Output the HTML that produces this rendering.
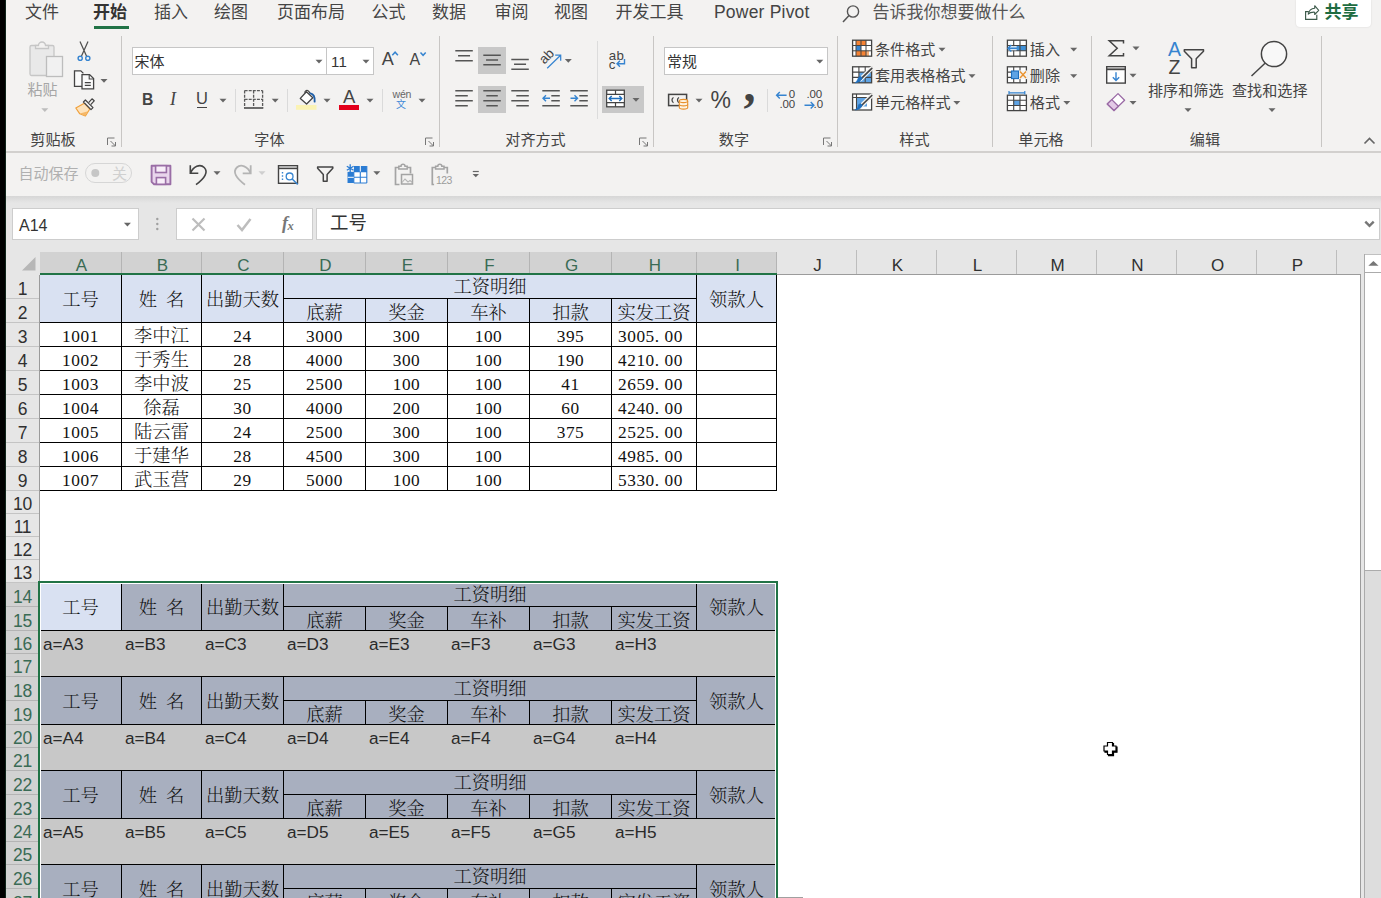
<!DOCTYPE html>
<html lang="zh-CN"><head><meta charset="utf-8"><title>Excel</title>
<style>
*{box-sizing:border-box;margin:0;padding:0}
html,body{width:1381px;height:898px;overflow:hidden;background:#f3f2f1}
body{position:relative;font-family:"Liberation Sans","Noto Sans CJK SC",sans-serif;color:#444;-webkit-font-smoothing:antialiased}
.a{position:absolute}
.t{position:absolute;white-space:nowrap;line-height:1}
.ser{font-family:"Liberation Serif","Noto Serif CJK SC",serif}
.c{position:absolute;text-align:center;white-space:nowrap;overflow:hidden}
svg{position:absolute;left:0;top:0;overflow:visible}

.hd{position:absolute;text-align:center;font-size:17px;line-height:22px;color:#303030;white-space:nowrap}
.hd.s{color:#3a6b55}
.rh{position:absolute;left:6px;width:33px;text-align:center;font-size:17.5px;color:#303030;white-space:nowrap;letter-spacing:-0.3px}
.rh.s{color:#3a6b55}
.cell{position:absolute;text-align:center;white-space:nowrap;font-family:"Liberation Serif","Noto Serif CJK SC",serif;font-size:18.3px;color:#111;font-weight:300}
.n{font-size:17.3px;letter-spacing:0.55px}
.f{position:absolute;white-space:nowrap;font-size:17.2px;color:#2a2a2a;font-family:"Liberation Sans","Noto Sans CJK SC",sans-serif}
.ln{position:absolute;background:#000}
</style></head>
<body>
<div class="a" style="left:0px;top:0px;width:5px;height:898px;background:#000;"></div>
<div class="a" style="left:5px;top:0px;width:1px;height:898px;background:#10261b;"></div>
<div class="a" style="left:6px;top:151px;width:1375px;height:2px;background:#d2d0ce;"></div>
<div class="a" style="left:6px;top:153px;width:1375px;height:43px;background:#f3f2f1;"></div>
<div class="a" style="left:6px;top:196px;width:1375px;height:51px;background:#e6e6e6;"></div>
<div class="a" style="left:6px;top:196px;width:1375px;height:7px;background:linear-gradient(#d6d6d6,#e6e6e6);"></div>
<div class="t" style="left:25px;top:4px;font-size:17px;height:17px;line-height:17px;color:#444;">文件</div>
<div class="t" style="left:154px;top:4px;font-size:17px;height:17px;line-height:17px;color:#444;">插入</div>
<div class="t" style="left:214px;top:4px;font-size:17px;height:17px;line-height:17px;color:#444;">绘图</div>
<div class="t" style="left:277px;top:4px;font-size:17px;height:17px;line-height:17px;color:#444;">页面布局</div>
<div class="t" style="left:371.5px;top:4px;font-size:17px;height:17px;line-height:17px;color:#444;">公式</div>
<div class="t" style="left:432px;top:4px;font-size:17px;height:17px;line-height:17px;color:#444;">数据</div>
<div class="t" style="left:494.5px;top:4px;font-size:17px;height:17px;line-height:17px;color:#444;">审阅</div>
<div class="t" style="left:554px;top:4px;font-size:17px;height:17px;line-height:17px;color:#444;">视图</div>
<div class="t" style="left:615.5px;top:4px;font-size:17px;height:17px;line-height:17px;color:#444;">开发工具</div>
<div class="t" style="left:93px;top:4px;font-size:17px;height:17px;line-height:17px;color:#333;font-weight:bold">开始</div>
<div class="a" style="left:94px;top:26px;width:35px;height:3px;background:#217346;"></div>
<div class="t" style="left:714px;top:3.75px;font-size:17.5px;height:17.5px;line-height:17.5px;color:#444;letter-spacing:0.2px">Power Pivot</div>
<div class="t" style="left:872.5px;top:4px;font-size:17px;height:17px;line-height:17px;color:#555;">告诉我你想要做什么</div>
<div class="a" style="left:1296px;top:0px;width:75px;height:27px;background:#fff;border-radius:0 0 4px 4px;box-shadow:0 0 2px rgba(0,0,0,.12)"></div>
<div class="t" style="left:1324.5px;top:4.3px;font-size:17px;height:17px;line-height:17px;color:#1e6c41;font-weight:bold">共享</div>
<div class="a" style="left:121px;top:36px;width:1px;height:111px;background:#c8c6c4;"></div>
<div class="a" style="left:439px;top:36px;width:1px;height:111px;background:#c8c6c4;"></div>
<div class="a" style="left:597px;top:41px;width:1px;height:78px;background:#dcdcdc;"></div>
<div class="a" style="left:653px;top:36px;width:1px;height:111px;background:#c8c6c4;"></div>
<div class="a" style="left:837px;top:36px;width:1px;height:111px;background:#c8c6c4;"></div>
<div class="a" style="left:992px;top:36px;width:1px;height:111px;background:#c8c6c4;"></div>
<div class="a" style="left:1091px;top:36px;width:1px;height:111px;background:#c8c6c4;"></div>
<div class="a" style="left:1321px;top:36px;width:1px;height:111px;background:#c8c6c4;"></div>
<div class="a" style="left:235px;top:89px;width:1px;height:23px;background:#dadada;"></div>
<div class="a" style="left:287px;top:89px;width:1px;height:23px;background:#dadada;"></div>
<div class="a" style="left:382px;top:89px;width:1px;height:23px;background:#dadada;"></div>
<div class="a" style="left:767px;top:89px;width:1px;height:23px;background:#dadada;"></div>
<div class="t" style="left:30.3px;top:132.25px;font-size:15.1px;height:15.1px;line-height:15.1px;color:#444;">剪贴板</div>
<div class="t" style="left:254.3px;top:132.25px;font-size:15.1px;height:15.1px;line-height:15.1px;color:#444;">字体</div>
<div class="t" style="left:505.3px;top:132.25px;font-size:15.1px;height:15.1px;line-height:15.1px;color:#444;">对齐方式</div>
<div class="t" style="left:718.8px;top:132.25px;font-size:15.1px;height:15.1px;line-height:15.1px;color:#444;">数字</div>
<div class="t" style="left:899.3px;top:132.25px;font-size:15.1px;height:15.1px;line-height:15.1px;color:#444;">样式</div>
<div class="t" style="left:1018.3px;top:132.25px;font-size:15.1px;height:15.1px;line-height:15.1px;color:#444;">单元格</div>
<div class="t" style="left:1189.8px;top:132.25px;font-size:15.1px;height:15.1px;line-height:15.1px;color:#444;">编辑</div>
<div class="t" style="left:27.5px;top:81.5px;font-size:15px;height:15px;line-height:15px;color:#a6a6a6;">粘贴</div>
<div class="a" style="left:132px;top:47px;width:195px;height:28px;background:#fff;border:1px solid #c6c6c6"></div>
<div class="a" style="left:327px;top:47px;width:47px;height:28px;background:#fff;border:1px solid #c6c6c6;border-left:none"></div>
<div class="t" style="left:134.5px;top:53.5px;font-size:15px;height:15px;line-height:15px;color:#333;">宋体</div>
<div class="t" style="left:331px;top:53.5px;font-size:15px;height:15px;line-height:15px;color:#333;letter-spacing:0.3px">11</div>
<div class="t" style="left:381.8px;top:50px;font-size:18px;height:18px;line-height:18px;color:#444;">A</div>
<div class="t" style="left:409.5px;top:52px;font-size:16px;height:16px;line-height:16px;color:#444;">A</div>
<div class="t" style="left:141.6px;top:90.7px;font-size:17px;height:17px;line-height:17px;color:#444;font-weight:bold;transform:scaleX(0.92);transform-origin:0 0">B</div>
<div class="t" style="left:170px;top:90px;font-size:18px;height:18px;line-height:18px;color:#444;font-style:italic;font-family:'Liberation Serif',serif">I</div>
<div class="t" style="left:196px;top:90.25px;font-size:16.5px;height:16.5px;line-height:16.5px;color:#444;">U</div>
<div class="a" style="left:196.5px;top:106.5px;width:10.5px;height:1.3px;background:#444;"></div>
<div class="t" style="left:343px;top:87.55px;font-size:18.5px;height:18.5px;line-height:18.5px;color:#444;">A</div>
<div class="a" style="left:339px;top:105px;width:20px;height:5px;background:#e3001b;"></div>
<div class="t" style="left:392.5px;top:89.05px;font-size:10.5px;height:10.5px;line-height:10.5px;color:#666;letter-spacing:-0.2px">wén</div>
<div class="t" style="left:396px;top:100.2px;font-size:10px;height:10px;line-height:10px;color:#3f8ad8;">文</div>
<div class="a" style="left:478px;top:47px;width:28px;height:27px;background:#c8c8c8;"></div>
<div class="a" style="left:478px;top:86px;width:28px;height:27px;background:#c8c8c8;"></div>
<div class="a" style="left:602px;top:86px;width:42px;height:27px;background:#c8c8c8;"></div>
<div class="t" style="left:539.8px;top:48.7px;font-size:13.5px;color:#444;transform:rotate(-46deg);transform-origin:8px 8px">ab</div>
<div class="t" style="left:608.8px;top:48.65px;font-size:13.3px;height:13.3px;line-height:13.3px;color:#444;letter-spacing:0.2px">ab</div>
<div class="t" style="left:608.8px;top:57.85px;font-size:13.3px;height:13.3px;line-height:13.3px;color:#444;">c</div>
<div class="a" style="left:664px;top:47px;width:164px;height:28px;background:#fff;border:1px solid #c6c6c6"></div>
<div class="t" style="left:667px;top:53.5px;font-size:15px;height:15px;line-height:15px;color:#333;">常规</div>
<div class="t" style="left:710.5px;top:89px;font-size:23px;height:23px;line-height:23px;color:#444;">%</div>
<div class="t" style="left:743.5px;top:60.5px;font-size:48px;height:48px;line-height:48px;color:#444;font-family:'Liberation Serif',serif;font-weight:bold">,</div>
<div class="t" style="left:788.8px;top:89.25px;font-size:11.5px;height:11.5px;line-height:11.5px;color:#444;">0</div>
<div class="t" style="left:779.5px;top:99.25px;font-size:11.5px;height:11.5px;line-height:11.5px;color:#444;letter-spacing:-0.2px">.00</div>
<div class="t" style="left:806.5px;top:89.25px;font-size:11.5px;height:11.5px;line-height:11.5px;color:#444;letter-spacing:-0.2px">.00</div>
<div class="t" style="left:813.5px;top:99.25px;font-size:11.5px;height:11.5px;line-height:11.5px;color:#444;">.0</div>
<div class="t" style="left:875px;top:41.75px;font-size:15.1px;height:15.1px;line-height:15.1px;color:#444;">条件格式</div>
<div class="t" style="left:875px;top:68.25px;font-size:15.1px;height:15.1px;line-height:15.1px;color:#444;">套用表格格式</div>
<div class="t" style="left:875px;top:95.05px;font-size:15.1px;height:15.1px;line-height:15.1px;color:#444;">单元格样式</div>
<div class="t" style="left:1029.8px;top:41.75px;font-size:15.1px;height:15.1px;line-height:15.1px;color:#444;">插入</div>
<div class="t" style="left:1029.8px;top:68.25px;font-size:15.1px;height:15.1px;line-height:15.1px;color:#444;">删除</div>
<div class="t" style="left:1029.8px;top:95.05px;font-size:15.1px;height:15.1px;line-height:15.1px;color:#444;">格式</div>
<div class="t" style="left:1168px;top:40.25px;font-size:19.5px;height:19.5px;line-height:19.5px;color:#3684d0;">A</div>
<div class="t" style="left:1168.5px;top:58.25px;font-size:19.5px;height:19.5px;line-height:19.5px;color:#444;">Z</div>
<div class="t" style="left:1148px;top:82.95px;font-size:15.1px;height:15.1px;line-height:15.1px;color:#444;">排序和筛选</div>
<div class="t" style="left:1232px;top:82.95px;font-size:15.1px;height:15.1px;line-height:15.1px;color:#444;">查找和选择</div>
<div class="t" style="left:18.5px;top:165.8px;font-size:15px;height:15px;line-height:15px;color:#b0b0b0;">自动保存</div>
<div class="a" style="left:85px;top:163px;width:47px;height:20px;background:#f3f2f1;border:1.3px solid #d6d6d6;border-radius:10px"></div>
<div class="t" style="left:112px;top:165.8px;font-size:15px;height:15px;line-height:15px;color:#d0d0d0;">关</div>
<div class="t" style="left:436px;top:175.05px;font-size:10.5px;height:10.5px;line-height:10.5px;color:#9c9c9c;letter-spacing:-0.6px">123</div>
<div class="a" style="left:12px;top:208px;width:127px;height:32px;background:#fff;border:1px solid #cdcdcd"></div>
<div class="t" style="left:19px;top:217.8px;font-size:16px;height:16px;line-height:16px;color:#333;">A14</div>
<div class="a" style="left:176px;top:208px;width:137px;height:32px;background:#fff;border:1px solid #cdcdcd"></div>
<div class="t" style="left:282px;top:214.3px;font-size:18px;height:18px;line-height:18px;color:#777;font-style:italic;font-weight:bold;font-family:'Liberation Serif',serif">f</div>
<div class="t" style="left:287.5px;top:219.75px;font-size:12.5px;height:12.5px;line-height:12.5px;color:#777;font-style:italic;font-weight:bold;font-family:'Liberation Serif',serif">x</div>
<div class="a" style="left:316px;top:208px;width:1064px;height:32px;background:#fff;border:1px solid #cdcdcd"></div>
<div class="t" style="left:330px;top:213.8px;font-size:18.4px;height:18.4px;line-height:18.4px;color:#333;">工号</div>
<svg width="1381" height="260"><circle cx="853" cy="11.5" r="5.6" fill="none" stroke="#555" stroke-width="1.4"/><path d="M849,15.5 L843,22" stroke="#555" stroke-width="1.5"/>
<path d="M1308.8,11.6 H1305.6 V19.4 H1316.8 V14.8" fill="none" stroke="#3c5a4a" stroke-width="1.15"/><path d="M1308.2,14.2 C1309,10.2 1311.5,8.4 1314.7,8.3 V5.7 L1318.7,10.3 L1314.7,14.5 V12.2 C1311.8,12 1309.6,12.7 1308.2,14.2 Z" fill="none" stroke="#3c5a4a" stroke-width="1.1" stroke-linejoin="round"/>
<path d="M107.5,145 v-7 h7" fill="none" stroke="#777" stroke-width="1"/><path d="M110.5,141 l5,5 M115.5,146 v-4 M115.5,146 h-4" fill="none" stroke="#777" stroke-width="1"/>
<path d="M425.5,145 v-7 h7" fill="none" stroke="#777" stroke-width="1"/><path d="M428.5,141 l5,5 M433.5,146 v-4 M433.5,146 h-4" fill="none" stroke="#777" stroke-width="1"/>
<path d="M639.5,145 v-7 h7" fill="none" stroke="#777" stroke-width="1"/><path d="M642.5,141 l5,5 M647.5,146 v-4 M647.5,146 h-4" fill="none" stroke="#777" stroke-width="1"/>
<path d="M823.5,145 v-7 h7" fill="none" stroke="#777" stroke-width="1"/><path d="M826.5,141 l5,5 M831.5,146 v-4 M831.5,146 h-4" fill="none" stroke="#777" stroke-width="1"/>
<path d="M1364.5,143.5 l5,-5 l5,5" fill="none" stroke="#666" stroke-width="1.6"/>
<rect x="30" y="45.5" width="24" height="30" rx="1.5" fill="#e9e9e9" stroke="#c6c6c6" stroke-width="1.3"/><path d="M35.5,48.5 v-3 h3 a3.5,3.5 0 0 1 7,0 h3 v3 z" fill="#f3f2f1" stroke="#c6c6c6" stroke-width="1.3"/><rect x="46.5" y="56.5" width="16" height="20" fill="#f1f1f1" stroke="#bdbdbd" stroke-width="1.3"/>
<polygon points="41.3,108.3 48.3,108.3 44.8,112" fill="#bdbdbd"/>
<path d="M80,41.6 L86.6,56.2 M88,41.6 L81.4,56.2" stroke="#505050" stroke-width="1.25" fill="none"/><circle cx="80.2" cy="58.3" r="2.1" fill="#f3f2f1" stroke="#3684d0" stroke-width="1.4"/><circle cx="87.8" cy="58.3" r="2.1" fill="#f3f2f1" stroke="#3684d0" stroke-width="1.4"/>
<path d="M82,86.4 h-7.5 v-15.6 h6.3 l2.6,2.6" fill="#fafafa" stroke="#444" stroke-width="1.3"/><path d="M82,74.6 h7.6 l4,4 v10.2 h-11.6 z" fill="#fafafa" stroke="#444" stroke-width="1.3"/><path d="M89.2,74.8 v4.2 h4.2" fill="none" stroke="#444" stroke-width="1.1"/><path d="M84.8,82.6 h6 M84.8,85.4 h6" stroke="#444" stroke-width="1.2"/>
<polygon points="100.5,79 107.5,79 104,82.7" fill="#666"/>
<path d="M75.8,108 L84.3,103.2 L89.8,109 L85.4,116 L79.8,113.8 Z" fill="#fde3bd" stroke="#f0a13c" stroke-width="1.2" stroke-linejoin="round"/><path d="M80,113.6 L85.2,115.8 L88,111.2 Z" fill="#f5b868"/><path d="M83.4,102 l2,-2 l7.6,7.6 l-2,2 z" fill="#f3f2f1" stroke="#444" stroke-width="1.2" stroke-linejoin="round"/><path d="M88.6,102.6 l3.4,-3.8 l2.2,2 l-3.5,3.8" fill="#f3f2f1" stroke="#444" stroke-width="1.2" stroke-linejoin="round"/>
<polygon points="315.5,59.8 322.5,59.8 319,63.5" fill="#666"/>
<polygon points="362.5,59.8 369.5,59.8 366,63.5" fill="#666"/>
<path d="M392.3,55.3 l2.8,-3.1 l2.8,3.1" fill="none" stroke="#3684d0" stroke-width="1.5"/>
<path d="M420.5,52.5 l2.6,2.8 l2.6,-2.8" fill="none" stroke="#3684d0" stroke-width="1.5"/>
<polygon points="219.5,98.8 226.5,98.8 223,102.5" fill="#666"/>
<path d="M244.6,90.6 h18 M244.6,90.6 v17 M262.6,90.6 v17 M253.6,90.6 v17 M244.6,99.3 h18" fill="none" stroke="#5a5a5a" stroke-width="1.3" stroke-dasharray="3,1.1"/><path d="M244,108 h19.3" stroke="#555" stroke-width="1.7"/>
<polygon points="271.7,98.8 278.7,98.8 275.2,102.5" fill="#666"/>
<rect x="296" y="105" width="20.5" height="4.8" fill="#fbf3b4"/><path d="M300.3,98.4 L306.4,91.8 L312.8,97.8 L306.6,104 Z" fill="#fff" stroke="#444" stroke-width="1.3" stroke-linejoin="round"/><path d="M305,93.2 c-0.6,-2.6 2.4,-4 4,-1.6 l1,1.6" fill="none" stroke="#444" stroke-width="1.2"/><path d="M310.4,93.4 c3.2,0.6 4.6,3 4.2,8.2" fill="none" stroke="#1f5fa8" stroke-width="1.9" stroke-linecap="round"/>
<polygon points="323.5,98.8 330.5,98.8 327,102.5" fill="#666"/>
<polygon points="366.5,98.8 373.5,98.8 370,102.5" fill="#666"/>
<polygon points="418.5,98.8 425.5,98.8 422,102.5" fill="#666"/>
<path d="M455.3,50.8 h17.5 M458.05,55.7 h12 M455.3,60.7 h17.5" stroke="#555" stroke-width="1.5" fill="none"/>
<path d="M483.3,55.3 h17.5 M486.05,60 h12 M483.3,64.7 h17.5" stroke="#555" stroke-width="1.5" fill="none"/>
<path d="M511.3,59.5 h17.5 M514.05,64.3 h12 M511.3,69.2 h17.5" stroke="#555" stroke-width="1.5" fill="none"/>
<path d="M455.3,90.8 h17.5 M455.3,95.8 h12.5 M455.3,100.8 h17.5 M455.3,105.7 h12.5" stroke="#555" stroke-width="1.5" fill="none"/>
<path d="M483.3,90.8 h17.5 M486.3,95.8 h11.5 M483.3,100.8 h17.5 M486.3,105.7 h11.5" stroke="#555" stroke-width="1.5" fill="none"/>
<path d="M511.3,90.8 h17.5 M516.3,95.8 h12.5 M511.3,100.8 h17.5 M516.3,105.7 h12.5" stroke="#555" stroke-width="1.5" fill="none"/>
<path d="M542.3,90.8 h17.5 M542.3,105.7 h17.5" stroke="#555" stroke-width="1.5" fill="none"/>
<path d="M551.3,95.8 h8.5 M551.3,100.8 h8.5" stroke="#555" stroke-width="1.5" fill="none"/>
<path d="M543,98.3 h7 M546,95.3 l-3,3 l3,3" fill="none" stroke="#3684d0" stroke-width="1.4"/>
<path d="M570.3,90.8 h17.5 M570.3,105.7 h17.5" stroke="#555" stroke-width="1.5" fill="none"/>
<path d="M579.3,95.8 h8.5 M579.3,100.8 h8.5" stroke="#555" stroke-width="1.5" fill="none"/>
<path d="M570.5,98.3 h7 M574.5,95.3 l3,3 l-3,3" fill="none" stroke="#3684d0" stroke-width="1.4"/>
<path d="M547.2,68.3 L560.6,55.3 M555.2,55.2 h5.5 v5.5" fill="none" stroke="#3684d0" stroke-width="1.25"/>
<polygon points="564.8,59.1 571.8,59.1 568.3,62.8" fill="#666"/>
<path d="M624.5,59 v4.8 h-7.5 M620,60.8 l-3,3 l3,3" fill="none" stroke="#3684d0" stroke-width="1.4"/>
<rect x="606.7" y="90.2" width="17.6" height="16.6" fill="#fff" stroke="#444" stroke-width="1.3"/><path d="M606.7,94.3 h17.6 M606.7,102.7 h17.6 M615.5,90.2 v4.1 M615.5,102.7 v4.1" stroke="#444" stroke-width="1.2"/><rect x="607.4" y="95" width="16.2" height="7" fill="#fff"/><path d="M609.3,98.5 h12.4 M611.7,96 l-2.5,2.5 l2.5,2.5 M619.3,96 l2.5,2.5 l-2.5,2.5" fill="none" stroke="#1e6fbf" stroke-width="1.4"/>
<polygon points="632.5,98 639.5,98 636,101.7" fill="#666"/>
<polygon points="816.3,59.8 823.3,59.8 819.8,63.5" fill="#666"/>
<rect x="668.6" y="94.4" width="18" height="11.2" fill="none" stroke="#444" stroke-width="1.5"/><path d="M673.5,97.5 a3,3 0 0 0 0,5.2 M679,97.5 a3,3 0 0 0 0,5.2" fill="none" stroke="#444" stroke-width="1.3"/><path d="M679.3,101 v6.5 a4.2,1.6 0 0 0 8.4,0 v-6.5" fill="#fdf3e3" stroke="#e8912d" stroke-width="1.1"/><ellipse cx="683.5" cy="101" rx="4.2" ry="1.6" fill="#fdf3e3" stroke="#e8912d" stroke-width="1.1"/><path d="M679.3,104.3 a4.2,1.6 0 0 0 8.4,0" fill="none" stroke="#e8912d" stroke-width="1.1"/>
<polygon points="695.5,98.8 702.5,98.8 699,102.5" fill="#666"/>
<path d="M776.6,95.2 h10 M779.8,92 l-3.2,3.2 l3.2,3.2" fill="none" stroke="#3684d0" stroke-width="1.4"/>
<path d="M804.5,105.2 h9.4 M810.7,102 l3.2,3.2 l-3.2,3.2" fill="none" stroke="#3684d0" stroke-width="1.4"/>
<rect x="852.6" y="40.2" width="19" height="16" fill="#fff"/><rect x="856" y="40.2" width="10" height="5.3" fill="#f58233"/><rect x="856" y="45.5" width="5" height="5.3" fill="#3684d0"/><rect x="856" y="50.8" width="10" height="5.4" fill="#f58233"/><rect x="866" y="50.8" width="3" height="5.4" fill="#f9b27c"/><rect x="852.6" y="40.2" width="19" height="16" fill="none" stroke="#444" stroke-width="1.3"/><path d="M856,40.2 v16 M861,40.2 v16 M866,40.2 v16 M852.6,45.5 h19 M852.6,50.8 h19" stroke="#444" stroke-width="1"/>
<rect x="852.6" y="66.8" width="19" height="16" fill="#fff"/><rect x="858.9" y="72.1" width="12.7" height="10.7" fill="#5ea3e4"/>
<rect x="852.6" y="66.8" width="19" height="16" fill="none" stroke="#444" stroke-width="1.3"/><path d="M858.9,66.8 v16 M865.2,66.8 v16 M852.6,72.1 h19 M852.6,77.4 h19" stroke="#444" stroke-width="1.1"/>
<path d="M871.8,68.3 L860.5,79.3" stroke="#f3f2f1" stroke-width="4.2" stroke-linecap="round"/><path d="M871.8,68.3 L861,78.8" stroke="#444" stroke-width="1.7" stroke-linecap="round"/><path d="M862.3,78 q-1.5,4.5 -7.3,4.7 q2.2,-1.2 2.7,-3.4 q0.6,-2.6 3,-3 z" fill="#1e6fbf" stroke="#1e6fbf" stroke-width="0.6"/>
<rect x="852.6" y="94" width="19" height="16" fill="#fff" stroke="#444" stroke-width="1.3"/><rect x="856.5" y="97.5" width="10.5" height="9" fill="#5ea3e4"/><path d="M852.6,97.5 h19 M856.5,94 v16" stroke="#444" stroke-width="1.1"/>
<path d="M871.8,95.5 L860.5,106.5" stroke="#f3f2f1" stroke-width="4.2" stroke-linecap="round"/><path d="M871.8,95.5 L861,106" stroke="#444" stroke-width="1.7" stroke-linecap="round"/><path d="M862.3,105.2 q-1.5,4.5 -7.3,4.7 q2.2,-1.2 2.7,-3.4 q0.6,-2.6 3,-3 z" fill="#1e6fbf" stroke="#1e6fbf" stroke-width="0.6"/>
<polygon points="938.5,47.8 945.5,47.8 942,51.5" fill="#666"/>
<polygon points="968.5,74.3 975.5,74.3 972,78" fill="#666"/>
<polygon points="953.3,101.1 960.3,101.1 956.8,104.8" fill="#666"/>
<rect x="1007.4" y="40.2" width="19" height="16" fill="#fff"/><rect x="1007.4" y="45.5" width="19" height="5.3" fill="#cfe5f8"/><rect x="1016.5" y="45.5" width="9.9" height="5.3" fill="#3d8fd6"/>
<rect x="1007.4" y="40.2" width="19" height="16" fill="none" stroke="#444" stroke-width="1.3"/><path d="M1013.7,40.2 v16 M1020,40.2 v16 M1007.4,45.5 h19 M1007.4,50.8 h19" stroke="#444" stroke-width="1.1"/>
<rect x="1008" y="46.1" width="8.4" height="4.2" fill="#d6e9f9"/><path d="M1008,48.2 h9 M1011.3,44.9 l-3.3,3.3 l3.3,3.3" fill="none" stroke="#3684d0" stroke-width="1.4"/>
<rect x="1007.4" y="66.8" width="19" height="16" fill="#fff"/>
<rect x="1007.4" y="66.8" width="19" height="16" fill="none" stroke="#444" stroke-width="1.3"/><path d="M1013.7,66.8 v16 M1020,66.8 v16 M1007.4,72.1 h19 M1007.4,77.4 h19" stroke="#444" stroke-width="1.1"/>
<rect x="1011.5" y="71" width="7" height="7.6" fill="#5ea3e4" stroke="#1e6fbf" stroke-width="1.1"/><rect x="1019" y="70.5" width="8.5" height="8.6" fill="#f3f2f1"/><path d="M1020,71.5 l6,6.4 M1026,71.5 l-6,6.4" stroke="#e8912d" stroke-width="1.4"/>
<rect x="1007.4" y="95.2" width="19" height="15.4" fill="#fff"/><rect x="1013.7" y="100.3" width="6.3" height="5.2" fill="#5ea3e4"/><rect x="1007.4" y="95.2" width="19" height="15.4" fill="none" stroke="#444" stroke-width="1.3"/><path d="M1013.7,95.2 v15.4 M1020,95.2 v15.4 M1007.4,100.3 h19 M1007.4,105.5 h19" stroke="#444" stroke-width="1.1"/><path d="M1009,92.8 h15.8 M1009,91 v3.6 M1024.8,91 v3.6" stroke="#3684d0" stroke-width="1.2"/>
<polygon points="1070.2,47.8 1077.2,47.8 1073.7,51.5" fill="#666"/>
<polygon points="1070.2,74.3 1077.2,74.3 1073.7,78" fill="#666"/>
<polygon points="1063.3,101.1 1070.3,101.1 1066.8,104.8" fill="#666"/>
<path d="M1123.5,43.5 v-2.8 h-14.3 l8,7.5 l-8,7.5 h14.3 v-2.8" fill="none" stroke="#444" stroke-width="1.5" stroke-linejoin="miter"/>
<polygon points="1132.5,46.5 1139.5,46.5 1136,50.2" fill="#666"/>
<rect x="1106.7" y="66.7" width="18.6" height="16.4" fill="#fff" stroke="#444" stroke-width="1.4"/><path d="M1106.7,69.3 h18.6" stroke="#444" stroke-width="1.8"/><path d="M1116,72.3 v8 M1112.8,77.3 l3.2,3.2 l3.2,-3.2" fill="none" stroke="#3684d0" stroke-width="1.4"/>
<polygon points="1129.5,73.8 1136.5,73.8 1133,77.5" fill="#666"/>
<path d="M1107.3,104 L1118,93.6 L1124.6,100.3 L1114,110.5 Z" fill="#fff" stroke="#9a6aa5" stroke-width="1.3" stroke-linejoin="round"/><path d="M1107.3,104 L1111.8,99.6 L1118.4,106.3 L1114,110.5 Z" fill="#e3c9e6" stroke="#9a6aa5" stroke-width="1.3" stroke-linejoin="round"/>
<polygon points="1129.5,101.1 1136.5,101.1 1133,104.8" fill="#666"/>
<path d="M1184.3,49.8 h19.2 v1.5 l-7.3,7.5 v9 h-4.6 v-9 l-7.3,-7.5 z" fill="none" stroke="#444" stroke-width="1.5" stroke-linejoin="round"/>
<polygon points="1184.5,108.3 1191.5,108.3 1188,112" fill="#666"/>
<circle cx="1274" cy="54" r="12.6" fill="#f8f8f8" stroke="#444" stroke-width="1.5"/><path d="M1265,63.3 L1251.5,76" stroke="#444" stroke-width="1.5"/>
<polygon points="1268.5,108.3 1275.5,108.3 1272,112" fill="#666"/>
<circle cx="95.3" cy="173" r="4" fill="#c6c6c6"/>
<path d="M151.6,165.7 h18.8 v18.6 h-16.3 l-2.5,-2.5 z" fill="#e9d5ec" stroke="#9a6ea6" stroke-width="1.9" stroke-linejoin="round"/><rect x="155.6" y="165.7" width="10.8" height="6.8" fill="#f8eef9" stroke="#9a6ea6" stroke-width="1.6"/><rect x="156.4" y="177.6" width="9.2" height="6.7" fill="#f8eef9" stroke="#9a6ea6" stroke-width="1.6"/>
<path d="M190.3,165.3 v8 h8 M190.6,173 c2.5,-6.5 9.5,-9.5 13.6,-5.5 c4.5,4.5 0.5,11 -8.2,17.2" fill="none" stroke="#444" stroke-width="1.6"/>
<polygon points="213.5,171.3 220.5,171.3 217,175" fill="#666"/>
<path d="M250.7,165.3 v8 h-8 M250.4,173 c-2.5,-6.5 -9.5,-9.5 -13.6,-5.5 c-4.5,4.5 -0.5,11 8.2,17.2" fill="none" stroke="#b4b4b4" stroke-width="1.8"/>
<polygon points="258.5,171.3 265.5,171.3 262,175" fill="#cfcfcf"/>
<rect x="278.5" y="165.7" width="19" height="17.6" fill="#fff" stroke="#444" stroke-width="1.4"/><path d="M278.5,168.4 h19" stroke="#444" stroke-width="1.6"/><path d="M282.5,172 v9" stroke="#3684d0" stroke-width="1.4" stroke-dasharray="1.6,1.6"/><circle cx="289.6" cy="176.4" r="3.4" fill="#fff" stroke="#3684d0" stroke-width="1.3"/><path d="M292.2,179 l5.5,5.5" stroke="#3684d0" stroke-width="1.5"/>
<path d="M317.6,167 h15.2 v1.3 l-5.7,6.2 v6.7 h-3.8 v-6.7 l-5.7,-6.2 z" fill="none" stroke="#444" stroke-width="1.5" stroke-linejoin="round"/>
<rect x="347.5" y="166" width="19.3" height="17" fill="#fff"/><rect x="353.8" y="166" width="13" height="5.6" fill="#2b7cd3"/><rect x="347.5" y="171.6" width="6.3" height="11.4" fill="#2b7cd3"/><path d="M353.8,171.6 v11.4 M360.3,166 v17 M353.8,171.6 h13 M347.5,177.3 h19.3 M353.8,183 h13 M366.8,166 v17" stroke="#2b7cd3" stroke-width="1.1" fill="none"/><path d="M360.3,166 v5.6 M347.5,177.3 h6.3" stroke="#fff" stroke-width="1"/><rect x="346" y="164" width="7.8" height="7.6" fill="#f3f2f1"/><path d="M350.2,164.3 v8 M346.8,166.3 l6.8,4 M353.6,166.3 l-6.8,4" stroke="#2b7cd3" stroke-width="1.3"/>
<polygon points="373.3,171.3 380.3,171.3 376.8,175" fill="#666"/>
<path d="M399.5,184.5 h-4 v-17 h15 v6" fill="none" stroke="#a4a4a4" stroke-width="1.7"/>
<path d="M398.8,169 v-2.7 h2.2 a2,2 0 0 1 4,0 h2.2 v2.7 z" fill="#f3f2f1" stroke="#a4a4a4" stroke-width="1.5"/>
<path d="M434.1,184.5 h-1.8 v-17 h15 v6" fill="none" stroke="#a4a4a4" stroke-width="1.7"/>
<path d="M435.6,169 v-2.7 h2.2 a2,2 0 0 1 4,0 h2.2 v2.7 z" fill="#f3f2f1" stroke="#a4a4a4" stroke-width="1.5"/>
<rect x="401.5" y="174.5" width="11" height="9.5" fill="#f3f2f1" stroke="#a4a4a4" stroke-width="1.5"/><path d="M402,182.5 l3,-3.5 l3,3 l2,-1.5 l2.5,2" fill="none" stroke="#b5b5b5" stroke-width="1.1"/>
<path d="M472.8,171.5 h6" stroke="#666" stroke-width="1.2"/><polygon points="472.6,174 479,174 475.8,177.3" fill="#666"/>
<polygon points="123.9,222.8 130.9,222.8 127.4,226.5" fill="#666"/>
<circle cx="157.3" cy="219" r="1.2" fill="#a0a0a0"/><circle cx="157.3" cy="224" r="1.2" fill="#a0a0a0"/><circle cx="157.3" cy="229" r="1.2" fill="#a0a0a0"/>
<path d="M192.5,218.5 l12,12 M204.5,218.5 l-12,12" stroke="#bdbdbd" stroke-width="2.2"/>
<path d="M237.5,225 l4.5,5 l8.5,-11" fill="none" stroke="#bdbdbd" stroke-width="2.5"/>
<path d="M1365.3,221.6 l4.2,4.2 l4.2,-4.2" fill="none" stroke="#777" stroke-width="2.4"/></svg><div class="a" style="left:6px;top:245px;width:1375px;height:653px;background:#e6e6e6;"></div>
<div class="a" style="left:40px;top:275px;width:1320px;height:623px;background:#fff;"></div>
<div class="a" style="left:40px;top:252px;width:737px;height:21px;background:#d2d2d2;"></div>
<div class="hd s" style="left:41px;top:255px;width:81px">A</div>
<div class="a" style="left:121px;top:252px;width:1px;height:22px;background:#b4b4b4;"></div>
<div class="hd s" style="left:123px;top:255px;width:79px">B</div>
<div class="a" style="left:201px;top:252px;width:1px;height:22px;background:#b4b4b4;"></div>
<div class="hd s" style="left:203px;top:255px;width:81px">C</div>
<div class="a" style="left:283px;top:252px;width:1px;height:22px;background:#b4b4b4;"></div>
<div class="hd s" style="left:285px;top:255px;width:81px">D</div>
<div class="a" style="left:365px;top:252px;width:1px;height:22px;background:#b4b4b4;"></div>
<div class="hd s" style="left:367px;top:255px;width:81px">E</div>
<div class="a" style="left:447px;top:252px;width:1px;height:22px;background:#b4b4b4;"></div>
<div class="hd s" style="left:449px;top:255px;width:81px">F</div>
<div class="a" style="left:529px;top:252px;width:1px;height:22px;background:#b4b4b4;"></div>
<div class="hd s" style="left:531px;top:255px;width:81px">G</div>
<div class="a" style="left:611px;top:252px;width:1px;height:22px;background:#b4b4b4;"></div>
<div class="hd s" style="left:613px;top:255px;width:84px">H</div>
<div class="a" style="left:696px;top:252px;width:1px;height:22px;background:#b4b4b4;"></div>
<div class="hd s" style="left:698px;top:255px;width:79px">I</div>
<div class="a" style="left:776px;top:252px;width:1px;height:22px;background:#b4b4b4;"></div>
<div class="hd" style="left:778px;top:255px;width:79px">J</div>
<div class="a" style="left:856px;top:250px;width:1px;height:24px;background:#bdbdbd;"></div>
<div class="hd" style="left:858px;top:255px;width:79px">K</div>
<div class="a" style="left:936px;top:250px;width:1px;height:24px;background:#bdbdbd;"></div>
<div class="hd" style="left:938px;top:255px;width:79px">L</div>
<div class="a" style="left:1016px;top:250px;width:1px;height:24px;background:#bdbdbd;"></div>
<div class="hd" style="left:1018px;top:255px;width:79px">M</div>
<div class="a" style="left:1096px;top:250px;width:1px;height:24px;background:#bdbdbd;"></div>
<div class="hd" style="left:1098px;top:255px;width:79px">N</div>
<div class="a" style="left:1176px;top:250px;width:1px;height:24px;background:#bdbdbd;"></div>
<div class="hd" style="left:1178px;top:255px;width:79px">O</div>
<div class="a" style="left:1256px;top:250px;width:1px;height:24px;background:#bdbdbd;"></div>
<div class="hd" style="left:1258px;top:255px;width:79px">P</div>
<div class="a" style="left:1336px;top:250px;width:1px;height:24px;background:#bdbdbd;"></div>
<div class="a" style="left:777px;top:274px;width:584px;height:1px;background:#9b9b9b;"></div>
<svg width="1381" height="898" style="pointer-events:none"><polygon points="22,270.5 35.5,270.5 35.5,257" fill="#b7b7b7"/></svg>
<div class="a" style="left:6px;top:583px;width:32px;height:315px;background:#d2d2d2;"></div>
<div class="rh" style="top:275px;height:23px;line-height:28px">1</div>
<div class="a" style="left:6px;top:298px;width:33px;height:1px;background:#c4c4c4;"></div>
<div class="rh" style="top:299px;height:23px;line-height:28px">2</div>
<div class="a" style="left:6px;top:322px;width:33px;height:1px;background:#c4c4c4;"></div>
<div class="rh" style="top:323px;height:23px;line-height:28px">3</div>
<div class="a" style="left:6px;top:346px;width:33px;height:1px;background:#c4c4c4;"></div>
<div class="rh" style="top:347px;height:23px;line-height:28px">4</div>
<div class="a" style="left:6px;top:370px;width:33px;height:1px;background:#c4c4c4;"></div>
<div class="rh" style="top:371px;height:23px;line-height:28px">5</div>
<div class="a" style="left:6px;top:394px;width:33px;height:1px;background:#c4c4c4;"></div>
<div class="rh" style="top:395px;height:23px;line-height:28px">6</div>
<div class="a" style="left:6px;top:418px;width:33px;height:1px;background:#c4c4c4;"></div>
<div class="rh" style="top:419px;height:23px;line-height:28px">7</div>
<div class="a" style="left:6px;top:442px;width:33px;height:1px;background:#c4c4c4;"></div>
<div class="rh" style="top:443px;height:23px;line-height:28px">8</div>
<div class="a" style="left:6px;top:466px;width:33px;height:1px;background:#c4c4c4;"></div>
<div class="rh" style="top:467px;height:23px;line-height:28px">9</div>
<div class="a" style="left:6px;top:490px;width:33px;height:1px;background:#c4c4c4;"></div>
<div class="rh" style="top:491px;height:22px;line-height:27px">10</div>
<div class="a" style="left:6px;top:513px;width:33px;height:1px;background:#c4c4c4;"></div>
<div class="rh" style="top:514px;height:22px;line-height:27px">11</div>
<div class="a" style="left:6px;top:536px;width:33px;height:1px;background:#c4c4c4;"></div>
<div class="rh" style="top:537px;height:22px;line-height:27px">12</div>
<div class="a" style="left:6px;top:559px;width:33px;height:1px;background:#c4c4c4;"></div>
<div class="rh" style="top:560px;height:22px;line-height:27px">13</div>
<div class="a" style="left:6px;top:582px;width:33px;height:1px;background:#c4c4c4;"></div>
<div class="rh s" style="top:583px;height:23px;line-height:28px">14</div>
<div class="a" style="left:6px;top:606px;width:33px;height:1px;background:#b4b4b4;"></div>
<div class="rh s" style="top:607px;height:23px;line-height:28px">15</div>
<div class="a" style="left:6px;top:630px;width:33px;height:1px;background:#b4b4b4;"></div>
<div class="rh s" style="top:631px;height:22px;line-height:27px">16</div>
<div class="a" style="left:6px;top:653px;width:33px;height:1px;background:#b4b4b4;"></div>
<div class="rh s" style="top:654px;height:22px;line-height:27px">17</div>
<div class="a" style="left:6px;top:676px;width:33px;height:1px;background:#b4b4b4;"></div>
<div class="rh s" style="top:677px;height:23px;line-height:28px">18</div>
<div class="a" style="left:6px;top:700px;width:33px;height:1px;background:#b4b4b4;"></div>
<div class="rh s" style="top:701px;height:23px;line-height:28px">19</div>
<div class="a" style="left:6px;top:724px;width:33px;height:1px;background:#b4b4b4;"></div>
<div class="rh s" style="top:725px;height:22px;line-height:27px">20</div>
<div class="a" style="left:6px;top:747px;width:33px;height:1px;background:#b4b4b4;"></div>
<div class="rh s" style="top:748px;height:22px;line-height:27px">21</div>
<div class="a" style="left:6px;top:770px;width:33px;height:1px;background:#b4b4b4;"></div>
<div class="rh s" style="top:771px;height:23px;line-height:28px">22</div>
<div class="a" style="left:6px;top:794px;width:33px;height:1px;background:#b4b4b4;"></div>
<div class="rh s" style="top:795px;height:23px;line-height:28px">23</div>
<div class="a" style="left:6px;top:818px;width:33px;height:1px;background:#b4b4b4;"></div>
<div class="rh s" style="top:819px;height:22px;line-height:27px">24</div>
<div class="a" style="left:6px;top:841px;width:33px;height:1px;background:#b4b4b4;"></div>
<div class="rh s" style="top:842px;height:22px;line-height:27px">25</div>
<div class="a" style="left:6px;top:864px;width:33px;height:1px;background:#b4b4b4;"></div>
<div class="rh s" style="top:865px;height:23px;line-height:28px">26</div>
<div class="a" style="left:6px;top:888px;width:33px;height:1px;background:#b4b4b4;"></div>
<div class="rh s" style="top:889px;height:23px;line-height:28px">27</div>
<div class="a" style="left:6px;top:912px;width:33px;height:1px;background:#b4b4b4;"></div>
<div class="a" style="left:39px;top:275px;width:1px;height:307px;background:#9b9b9b;"></div>
<div class="a" style="left:38px;top:581px;width:2px;height:317px;background:#217346;"></div>
<div class="a" style="left:1360px;top:275px;width:1px;height:623px;background:#9b9b9b;"></div>
<div class="a" style="left:1364px;top:254px;width:17px;height:644px;background:#dddddd;"></div>
<div class="a" style="left:1364px;top:254px;width:1px;height:644px;background:#ababab;"></div>
<div class="a" style="left:1365px;top:254px;width:16px;height:317px;background:#fff;"></div>
<div class="a" style="left:1365px;top:254px;width:16px;height:1px;background:#c0c0c0;"></div>
<div class="a" style="left:1365px;top:272px;width:16px;height:1px;background:#ababab;"></div>
<div class="a" style="left:1365px;top:570px;width:16px;height:1px;background:#ababab;"></div>
<svg width="1381" height="898"><polygon points="1368.3,265.8 1378.5,265.8 1373.4,261" fill="#777"/></svg>
<div class="a" style="left:40px;top:275px;width:736px;height:47px;background:#d9e1f2;"></div>
<div class="a" style="left:40px;top:583px;width:736px;height:315px;background:#c8c8c8;"></div>
<div class="a" style="left:40px;top:583px;width:736px;height:47px;background:#a8afbf;"></div>
<div class="a" style="left:40px;top:677px;width:736px;height:47px;background:#a8afbf;"></div>
<div class="a" style="left:40px;top:771px;width:736px;height:47px;background:#a8afbf;"></div>
<div class="a" style="left:40px;top:865px;width:736px;height:33px;background:#a8afbf;"></div>
<div class="a" style="left:40px;top:583px;width:81px;height:47px;background:#d9e1f2;border:1px solid #fff;border-right:none;border-bottom:none"></div>
<div class="a" style="left:40px;top:274px;width:737px;height:1px;background:#000;"></div>
<div class="a" style="left:40px;top:322px;width:737px;height:1px;background:#000;"></div>
<div class="a" style="left:121px;top:274px;width:1px;height:49px;background:#000;"></div>
<div class="a" style="left:201px;top:274px;width:1px;height:49px;background:#000;"></div>
<div class="a" style="left:283px;top:274px;width:1px;height:49px;background:#000;"></div>
<div class="a" style="left:696px;top:274px;width:1px;height:49px;background:#000;"></div>
<div class="a" style="left:776px;top:274px;width:1px;height:49px;background:#000;"></div>
<div class="a" style="left:283px;top:298px;width:414px;height:1px;background:#000;"></div>
<div class="a" style="left:365px;top:298px;width:1px;height:25px;background:#000;"></div>
<div class="a" style="left:447px;top:298px;width:1px;height:25px;background:#000;"></div>
<div class="a" style="left:529px;top:298px;width:1px;height:25px;background:#000;"></div>
<div class="a" style="left:611px;top:298px;width:1px;height:25px;background:#000;"></div>
<div class="a" style="left:40px;top:346px;width:737px;height:1px;background:#000;"></div>
<div class="a" style="left:40px;top:370px;width:737px;height:1px;background:#000;"></div>
<div class="a" style="left:40px;top:394px;width:737px;height:1px;background:#000;"></div>
<div class="a" style="left:40px;top:418px;width:737px;height:1px;background:#000;"></div>
<div class="a" style="left:40px;top:442px;width:737px;height:1px;background:#000;"></div>
<div class="a" style="left:40px;top:466px;width:737px;height:1px;background:#000;"></div>
<div class="a" style="left:40px;top:490px;width:737px;height:1px;background:#000;"></div>
<div class="a" style="left:121px;top:322px;width:1px;height:169px;background:#000;"></div>
<div class="a" style="left:201px;top:322px;width:1px;height:169px;background:#000;"></div>
<div class="a" style="left:283px;top:322px;width:1px;height:169px;background:#000;"></div>
<div class="a" style="left:365px;top:322px;width:1px;height:169px;background:#000;"></div>
<div class="a" style="left:447px;top:322px;width:1px;height:169px;background:#000;"></div>
<div class="a" style="left:529px;top:322px;width:1px;height:169px;background:#000;"></div>
<div class="a" style="left:611px;top:322px;width:1px;height:169px;background:#000;"></div>
<div class="a" style="left:696px;top:322px;width:1px;height:169px;background:#000;"></div>
<div class="a" style="left:776px;top:322px;width:1px;height:169px;background:#000;"></div>
<div class="a" style="left:40px;top:582px;width:737px;height:1px;background:#000;"></div>
<div class="a" style="left:40px;top:630px;width:737px;height:1px;background:#000;"></div>
<div class="a" style="left:121px;top:582px;width:1px;height:49px;background:#000;"></div>
<div class="a" style="left:201px;top:582px;width:1px;height:49px;background:#000;"></div>
<div class="a" style="left:283px;top:582px;width:1px;height:49px;background:#000;"></div>
<div class="a" style="left:696px;top:582px;width:1px;height:49px;background:#000;"></div>
<div class="a" style="left:776px;top:582px;width:1px;height:49px;background:#000;"></div>
<div class="a" style="left:283px;top:606px;width:414px;height:1px;background:#000;"></div>
<div class="a" style="left:365px;top:606px;width:1px;height:25px;background:#000;"></div>
<div class="a" style="left:447px;top:606px;width:1px;height:25px;background:#000;"></div>
<div class="a" style="left:529px;top:606px;width:1px;height:25px;background:#000;"></div>
<div class="a" style="left:611px;top:606px;width:1px;height:25px;background:#000;"></div>
<div class="a" style="left:40px;top:676px;width:737px;height:1px;background:#000;"></div>
<div class="a" style="left:40px;top:724px;width:737px;height:1px;background:#000;"></div>
<div class="a" style="left:121px;top:676px;width:1px;height:49px;background:#000;"></div>
<div class="a" style="left:201px;top:676px;width:1px;height:49px;background:#000;"></div>
<div class="a" style="left:283px;top:676px;width:1px;height:49px;background:#000;"></div>
<div class="a" style="left:696px;top:676px;width:1px;height:49px;background:#000;"></div>
<div class="a" style="left:776px;top:676px;width:1px;height:49px;background:#000;"></div>
<div class="a" style="left:283px;top:700px;width:414px;height:1px;background:#000;"></div>
<div class="a" style="left:365px;top:700px;width:1px;height:25px;background:#000;"></div>
<div class="a" style="left:447px;top:700px;width:1px;height:25px;background:#000;"></div>
<div class="a" style="left:529px;top:700px;width:1px;height:25px;background:#000;"></div>
<div class="a" style="left:611px;top:700px;width:1px;height:25px;background:#000;"></div>
<div class="a" style="left:40px;top:770px;width:737px;height:1px;background:#000;"></div>
<div class="a" style="left:40px;top:818px;width:737px;height:1px;background:#000;"></div>
<div class="a" style="left:121px;top:770px;width:1px;height:49px;background:#000;"></div>
<div class="a" style="left:201px;top:770px;width:1px;height:49px;background:#000;"></div>
<div class="a" style="left:283px;top:770px;width:1px;height:49px;background:#000;"></div>
<div class="a" style="left:696px;top:770px;width:1px;height:49px;background:#000;"></div>
<div class="a" style="left:776px;top:770px;width:1px;height:49px;background:#000;"></div>
<div class="a" style="left:283px;top:794px;width:414px;height:1px;background:#000;"></div>
<div class="a" style="left:365px;top:794px;width:1px;height:25px;background:#000;"></div>
<div class="a" style="left:447px;top:794px;width:1px;height:25px;background:#000;"></div>
<div class="a" style="left:529px;top:794px;width:1px;height:25px;background:#000;"></div>
<div class="a" style="left:611px;top:794px;width:1px;height:25px;background:#000;"></div>
<div class="a" style="left:40px;top:864px;width:737px;height:1px;background:#000;"></div>
<div class="a" style="left:121px;top:864px;width:1px;height:34px;background:#000;"></div>
<div class="a" style="left:201px;top:864px;width:1px;height:34px;background:#000;"></div>
<div class="a" style="left:283px;top:864px;width:1px;height:34px;background:#000;"></div>
<div class="a" style="left:696px;top:864px;width:1px;height:34px;background:#000;"></div>
<div class="a" style="left:776px;top:864px;width:1px;height:34px;background:#000;"></div>
<div class="a" style="left:283px;top:888px;width:414px;height:1px;background:#000;"></div>
<div class="a" style="left:365px;top:888px;width:1px;height:10px;background:#000;"></div>
<div class="a" style="left:447px;top:888px;width:1px;height:10px;background:#000;"></div>
<div class="a" style="left:529px;top:888px;width:1px;height:10px;background:#000;"></div>
<div class="a" style="left:611px;top:888px;width:1px;height:10px;background:#000;"></div>
<div class="a" style="left:40px;top:273px;width:737px;height:2px;background:#217346;"></div>
<div class="a" style="left:40px;top:581px;width:738px;height:2px;background:#217346;"></div>
<div class="a" style="left:776px;top:581px;width:2px;height:317px;background:#217346;"></div>
<div class="a" style="left:40px;top:583px;width:736px;height:1px;background:#fff;"></div>
<div class="a" style="left:775px;top:583px;width:1px;height:315px;background:#fff;"></div>
<div class="a" style="left:40px;top:583px;width:1px;height:315px;background:#fff;"></div>
<div class="a" style="left:778px;top:897px;width:25px;height:1px;background:#a0a0a0;"></div>
<div class="cell" style="left:40px;top:276.5px;width:81px;height:47px;line-height:47px">工号</div>
<div class="cell" style="left:122px;top:276.5px;width:79px;height:47px;line-height:47px">姓&nbsp;&nbsp;名</div>
<div class="cell" style="left:202px;top:276.5px;width:81px;height:47px;line-height:47px">出勤天数</div>
<div class="cell" style="left:284px;top:276px;width:412px;height:23px;line-height:23px">工资明细</div>
<div class="cell" style="left:284px;top:301.5px;width:81px;height:23px;line-height:23px">底薪</div>
<div class="cell" style="left:366px;top:301.5px;width:81px;height:23px;line-height:23px">奖金</div>
<div class="cell" style="left:448px;top:301.5px;width:81px;height:23px;line-height:23px">车补</div>
<div class="cell" style="left:530px;top:301.5px;width:81px;height:23px;line-height:23px">扣款</div>
<div class="cell" style="left:612px;top:301.5px;width:84px;height:23px;line-height:23px">实发工资</div>
<div class="cell" style="left:697px;top:276.5px;width:79px;height:47px;line-height:47px">领款人</div>
<div class="cell n" style="left:40px;top:325px;width:81px;height:23px;line-height:23px">1001</div>
<div class="cell" style="left:122px;top:325px;width:79px;height:23px;line-height:23px">李中江</div>
<div class="cell n" style="left:202px;top:325px;width:81px;height:23px;line-height:23px">24</div>
<div class="cell n" style="left:284px;top:325px;width:81px;height:23px;line-height:23px">3000</div>
<div class="cell n" style="left:366px;top:325px;width:81px;height:23px;line-height:23px">300</div>
<div class="cell n" style="left:448px;top:325px;width:81px;height:23px;line-height:23px">100</div>
<div class="cell n" style="left:530px;top:325px;width:81px;height:23px;line-height:23px">395</div>
<div class="cell n" style="left:612px;top:323px;width:84px;height:23px;line-height:28px;text-align:left;padding-left:6px">3005<span style="letter-spacing:5.4px">.</span>00</div>
<div class="cell n" style="left:40px;top:349px;width:81px;height:23px;line-height:23px">1002</div>
<div class="cell" style="left:122px;top:349px;width:79px;height:23px;line-height:23px">于秀生</div>
<div class="cell n" style="left:202px;top:349px;width:81px;height:23px;line-height:23px">28</div>
<div class="cell n" style="left:284px;top:349px;width:81px;height:23px;line-height:23px">4000</div>
<div class="cell n" style="left:366px;top:349px;width:81px;height:23px;line-height:23px">300</div>
<div class="cell n" style="left:448px;top:349px;width:81px;height:23px;line-height:23px">100</div>
<div class="cell n" style="left:530px;top:349px;width:81px;height:23px;line-height:23px">190</div>
<div class="cell n" style="left:612px;top:347px;width:84px;height:23px;line-height:28px;text-align:left;padding-left:6px">4210<span style="letter-spacing:5.4px">.</span>00</div>
<div class="cell n" style="left:40px;top:373px;width:81px;height:23px;line-height:23px">1003</div>
<div class="cell" style="left:122px;top:373px;width:79px;height:23px;line-height:23px">李中波</div>
<div class="cell n" style="left:202px;top:373px;width:81px;height:23px;line-height:23px">25</div>
<div class="cell n" style="left:284px;top:373px;width:81px;height:23px;line-height:23px">2500</div>
<div class="cell n" style="left:366px;top:373px;width:81px;height:23px;line-height:23px">100</div>
<div class="cell n" style="left:448px;top:373px;width:81px;height:23px;line-height:23px">100</div>
<div class="cell n" style="left:530px;top:373px;width:81px;height:23px;line-height:23px">41</div>
<div class="cell n" style="left:612px;top:371px;width:84px;height:23px;line-height:28px;text-align:left;padding-left:6px">2659<span style="letter-spacing:5.4px">.</span>00</div>
<div class="cell n" style="left:40px;top:397px;width:81px;height:23px;line-height:23px">1004</div>
<div class="cell" style="left:122px;top:397px;width:79px;height:23px;line-height:23px">徐磊</div>
<div class="cell n" style="left:202px;top:397px;width:81px;height:23px;line-height:23px">30</div>
<div class="cell n" style="left:284px;top:397px;width:81px;height:23px;line-height:23px">4000</div>
<div class="cell n" style="left:366px;top:397px;width:81px;height:23px;line-height:23px">200</div>
<div class="cell n" style="left:448px;top:397px;width:81px;height:23px;line-height:23px">100</div>
<div class="cell n" style="left:530px;top:397px;width:81px;height:23px;line-height:23px">60</div>
<div class="cell n" style="left:612px;top:395px;width:84px;height:23px;line-height:28px;text-align:left;padding-left:6px">4240<span style="letter-spacing:5.4px">.</span>00</div>
<div class="cell n" style="left:40px;top:421px;width:81px;height:23px;line-height:23px">1005</div>
<div class="cell" style="left:122px;top:421px;width:79px;height:23px;line-height:23px">陆云雷</div>
<div class="cell n" style="left:202px;top:421px;width:81px;height:23px;line-height:23px">24</div>
<div class="cell n" style="left:284px;top:421px;width:81px;height:23px;line-height:23px">2500</div>
<div class="cell n" style="left:366px;top:421px;width:81px;height:23px;line-height:23px">300</div>
<div class="cell n" style="left:448px;top:421px;width:81px;height:23px;line-height:23px">100</div>
<div class="cell n" style="left:530px;top:421px;width:81px;height:23px;line-height:23px">375</div>
<div class="cell n" style="left:612px;top:419px;width:84px;height:23px;line-height:28px;text-align:left;padding-left:6px">2525<span style="letter-spacing:5.4px">.</span>00</div>
<div class="cell n" style="left:40px;top:445px;width:81px;height:23px;line-height:23px">1006</div>
<div class="cell" style="left:122px;top:445px;width:79px;height:23px;line-height:23px">于建华</div>
<div class="cell n" style="left:202px;top:445px;width:81px;height:23px;line-height:23px">28</div>
<div class="cell n" style="left:284px;top:445px;width:81px;height:23px;line-height:23px">4500</div>
<div class="cell n" style="left:366px;top:445px;width:81px;height:23px;line-height:23px">300</div>
<div class="cell n" style="left:448px;top:445px;width:81px;height:23px;line-height:23px">100</div>
<div class="cell n" style="left:612px;top:443px;width:84px;height:23px;line-height:28px;text-align:left;padding-left:6px">4985<span style="letter-spacing:5.4px">.</span>00</div>
<div class="cell n" style="left:40px;top:469px;width:81px;height:23px;line-height:23px">1007</div>
<div class="cell" style="left:122px;top:469px;width:79px;height:23px;line-height:23px">武玉营</div>
<div class="cell n" style="left:202px;top:469px;width:81px;height:23px;line-height:23px">29</div>
<div class="cell n" style="left:284px;top:469px;width:81px;height:23px;line-height:23px">5000</div>
<div class="cell n" style="left:366px;top:469px;width:81px;height:23px;line-height:23px">100</div>
<div class="cell n" style="left:448px;top:469px;width:81px;height:23px;line-height:23px">100</div>
<div class="cell n" style="left:612px;top:467px;width:84px;height:23px;line-height:28px;text-align:left;padding-left:6px">5330<span style="letter-spacing:5.4px">.</span>00</div>
<div class="cell" style="left:40px;top:584.5px;width:81px;height:47px;line-height:47px">工号</div>
<div class="cell" style="left:122px;top:584.5px;width:79px;height:47px;line-height:47px">姓&nbsp;&nbsp;名</div>
<div class="cell" style="left:202px;top:584.5px;width:81px;height:47px;line-height:47px">出勤天数</div>
<div class="cell" style="left:284px;top:584px;width:412px;height:23px;line-height:23px">工资明细</div>
<div class="cell" style="left:284px;top:609.5px;width:81px;height:23px;line-height:23px">底薪</div>
<div class="cell" style="left:366px;top:609.5px;width:81px;height:23px;line-height:23px">奖金</div>
<div class="cell" style="left:448px;top:609.5px;width:81px;height:23px;line-height:23px">车补</div>
<div class="cell" style="left:530px;top:609.5px;width:81px;height:23px;line-height:23px">扣款</div>
<div class="cell" style="left:612px;top:609.5px;width:84px;height:23px;line-height:23px">实发工资</div>
<div class="cell" style="left:697px;top:584.5px;width:79px;height:47px;line-height:47px">领款人</div>
<div class="cell" style="left:40px;top:678.5px;width:81px;height:47px;line-height:47px">工号</div>
<div class="cell" style="left:122px;top:678.5px;width:79px;height:47px;line-height:47px">姓&nbsp;&nbsp;名</div>
<div class="cell" style="left:202px;top:678.5px;width:81px;height:47px;line-height:47px">出勤天数</div>
<div class="cell" style="left:284px;top:678px;width:412px;height:23px;line-height:23px">工资明细</div>
<div class="cell" style="left:284px;top:703.5px;width:81px;height:23px;line-height:23px">底薪</div>
<div class="cell" style="left:366px;top:703.5px;width:81px;height:23px;line-height:23px">奖金</div>
<div class="cell" style="left:448px;top:703.5px;width:81px;height:23px;line-height:23px">车补</div>
<div class="cell" style="left:530px;top:703.5px;width:81px;height:23px;line-height:23px">扣款</div>
<div class="cell" style="left:612px;top:703.5px;width:84px;height:23px;line-height:23px">实发工资</div>
<div class="cell" style="left:697px;top:678.5px;width:79px;height:47px;line-height:47px">领款人</div>
<div class="cell" style="left:40px;top:772.5px;width:81px;height:47px;line-height:47px">工号</div>
<div class="cell" style="left:122px;top:772.5px;width:79px;height:47px;line-height:47px">姓&nbsp;&nbsp;名</div>
<div class="cell" style="left:202px;top:772.5px;width:81px;height:47px;line-height:47px">出勤天数</div>
<div class="cell" style="left:284px;top:772px;width:412px;height:23px;line-height:23px">工资明细</div>
<div class="cell" style="left:284px;top:797.5px;width:81px;height:23px;line-height:23px">底薪</div>
<div class="cell" style="left:366px;top:797.5px;width:81px;height:23px;line-height:23px">奖金</div>
<div class="cell" style="left:448px;top:797.5px;width:81px;height:23px;line-height:23px">车补</div>
<div class="cell" style="left:530px;top:797.5px;width:81px;height:23px;line-height:23px">扣款</div>
<div class="cell" style="left:612px;top:797.5px;width:84px;height:23px;line-height:23px">实发工资</div>
<div class="cell" style="left:697px;top:772.5px;width:79px;height:47px;line-height:47px">领款人</div>
<div class="cell" style="left:40px;top:866.5px;width:81px;height:47px;line-height:47px">工号</div>
<div class="cell" style="left:122px;top:866.5px;width:79px;height:47px;line-height:47px">姓&nbsp;&nbsp;名</div>
<div class="cell" style="left:202px;top:866.5px;width:81px;height:47px;line-height:47px">出勤天数</div>
<div class="cell" style="left:284px;top:866px;width:412px;height:23px;line-height:23px">工资明细</div>
<div class="cell" style="left:284px;top:891.5px;width:81px;height:23px;line-height:23px">底薪</div>
<div class="cell" style="left:366px;top:891.5px;width:81px;height:23px;line-height:23px">奖金</div>
<div class="cell" style="left:448px;top:891.5px;width:81px;height:23px;line-height:23px">车补</div>
<div class="cell" style="left:530px;top:891.5px;width:81px;height:23px;line-height:23px">扣款</div>
<div class="cell" style="left:612px;top:891.5px;width:84px;height:23px;line-height:23px">实发工资</div>
<div class="cell" style="left:697px;top:866.5px;width:79px;height:47px;line-height:47px">领款人</div>
<div class="f" style="left:43px;top:631px;line-height:27px">a=A3</div>
<div class="f" style="left:125px;top:631px;line-height:27px">a=B3</div>
<div class="f" style="left:205px;top:631px;line-height:27px">a=C3</div>
<div class="f" style="left:287px;top:631px;line-height:27px">a=D3</div>
<div class="f" style="left:369px;top:631px;line-height:27px">a=E3</div>
<div class="f" style="left:451px;top:631px;line-height:27px">a=F3</div>
<div class="f" style="left:533px;top:631px;line-height:27px">a=G3</div>
<div class="f" style="left:615px;top:631px;line-height:27px">a=H3</div>
<div class="f" style="left:43px;top:725px;line-height:27px">a=A4</div>
<div class="f" style="left:125px;top:725px;line-height:27px">a=B4</div>
<div class="f" style="left:205px;top:725px;line-height:27px">a=C4</div>
<div class="f" style="left:287px;top:725px;line-height:27px">a=D4</div>
<div class="f" style="left:369px;top:725px;line-height:27px">a=E4</div>
<div class="f" style="left:451px;top:725px;line-height:27px">a=F4</div>
<div class="f" style="left:533px;top:725px;line-height:27px">a=G4</div>
<div class="f" style="left:615px;top:725px;line-height:27px">a=H4</div>
<div class="f" style="left:43px;top:819px;line-height:27px">a=A5</div>
<div class="f" style="left:125px;top:819px;line-height:27px">a=B5</div>
<div class="f" style="left:205px;top:819px;line-height:27px">a=C5</div>
<div class="f" style="left:287px;top:819px;line-height:27px">a=D5</div>
<div class="f" style="left:369px;top:819px;line-height:27px">a=E5</div>
<div class="f" style="left:451px;top:819px;line-height:27px">a=F5</div>
<div class="f" style="left:533px;top:819px;line-height:27px">a=G5</div>
<div class="f" style="left:615px;top:819px;line-height:27px">a=H5</div>
<svg width="1381" height="898"><path d="M1108.5,743.7h5v3.5h3.5v5h-3.5v3.5h-5v-3.5h-3.5v-5h3.5z" fill="#000" stroke="#000" stroke-width="1.2"/><path d="M1107.5,742.5h5v3.5h3.5v5h-3.5v3.5h-5v-3.5h-3.5v-5h3.5z" fill="#fff" stroke="#000" stroke-width="1.2"/></svg>
</body></html>
